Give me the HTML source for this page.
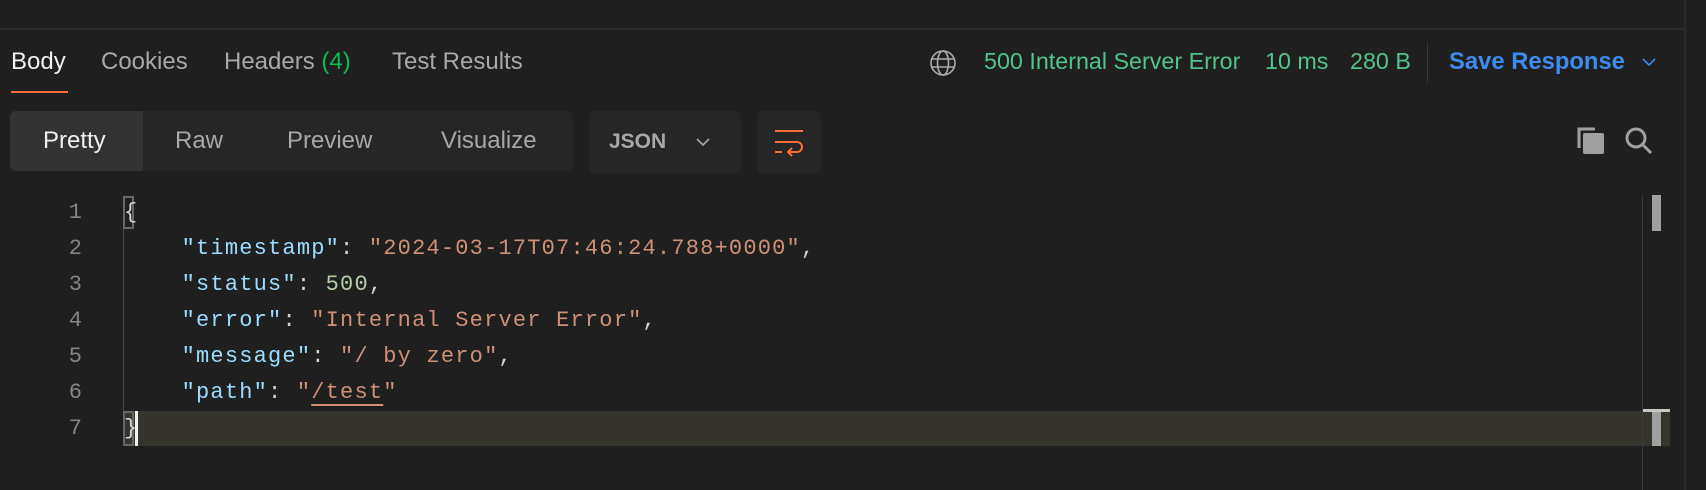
<!DOCTYPE html>
<html><head><meta charset="utf-8"><style>
body{margin:0;width:1706px;height:490px;background:#1f1f1f;overflow:hidden;position:relative;font-family:"Liberation Sans",sans-serif}
.a{position:absolute}
.t{font-size:24px;color:#a8a8a8;top:48px;white-space:nowrap}
.code{font-family:"Liberation Mono",monospace;font-size:22px;letter-spacing:1.2px;white-space:pre;line-height:36px}
.k{color:#9cdcfe}.s{color:#ce9178}.n{color:#b5cea8}.p{color:#d4d4d4}
.ln{font-family:"Liberation Mono",monospace;font-size:22px;color:#858585;width:82px;text-align:right;left:0;line-height:36px}
</style></head><body>
<div class="a" style="left:0;top:28px;width:1685px;height:2px;background:#2b2b2b"></div>
<div class="a" style="left:1684px;top:0;width:2px;height:490px;background:#2a2a2a"></div>
<div class="a t" style="left:11px;color:#f0f0f0">Body</div>
<div class="a t" style="left:101px">Cookies</div>
<div class="a t" style="left:224px">Headers <span style="color:#0cbb52">(4)</span></div>
<div class="a t" style="left:392px">Test Results</div>
<div class="a" style="left:11px;top:91px;width:57px;height:2px;background:#ff6c37"></div>
<svg class="a" style="left:929px;top:49px" width="28" height="28" viewBox="0 0 28 28" fill="none" stroke="#aaa" stroke-width="1.6"><circle cx="14" cy="14" r="12"/><ellipse cx="14" cy="14" rx="5.5" ry="12"/><path d="M3 10h22M3 18h22"/></svg>
<div class="a t" style="left:984px;color:#4fc58b;font-size:23.3px">500 Internal Server Error</div>
<div class="a t" style="left:1265px;color:#4fc58b;font-size:23.3px">10 ms</div>
<div class="a t" style="left:1350px;color:#4fc58b;font-size:23.3px">280 B</div>
<div class="a" style="left:1427px;top:43px;width:1px;height:40px;background:#3a3a3a"></div>
<div class="a t" style="left:1449px;color:#3e8bf0;font-weight:bold;font-size:23.8px">Save Response</div>
<svg class="a" style="left:1641px;top:56px" width="16" height="12" viewBox="0 0 16 12" fill="none" stroke="#3e8bf0" stroke-width="1.6"><path d="M2 3l6 6 6-6"/></svg>
<div class="a" style="left:10px;top:111px;width:563px;height:60px;background:#262626;border-radius:6px"></div>
<div class="a" style="left:10px;top:111px;width:133px;height:60px;background:#333;border-radius:6px 0 0 6px"></div>
<div class="a t" style="left:43px;top:127px;color:#f0f0f0">Pretty</div>
<div class="a t" style="left:175px;top:127px">Raw</div>
<div class="a t" style="left:287px;top:127px">Preview</div>
<div class="a t" style="left:441px;top:127px">Visualize</div>
<div class="a" style="left:589px;top:111px;width:152px;height:63px;background:#262626;border-radius:6px"></div>
<div class="a t" style="left:609px;top:130px;font-weight:bold;color:#a8a8a8;font-size:21px">JSON</div>
<svg class="a" style="left:695px;top:136px" width="16" height="12" viewBox="0 0 16 12" fill="none" stroke="#a8a8a8" stroke-width="1.6"><path d="M2 3l6 6 6-6"/></svg>
<div class="a" style="left:757px;top:111px;width:64px;height:63px;background:#262626;border-radius:6px"></div>
<svg class="a" style="left:773px;top:128px" width="32" height="30" viewBox="0 0 32 30" fill="none" stroke="#ff6c37" stroke-width="2"><path d="M2 3h28M2 14h22a5 5 0 0 1 0 10h-8M19 20l-4 4 4 4M2 24h7"/></svg>
<svg class="a" style="left:1576px;top:126px" width="30" height="30" viewBox="0 0 30 30"><path d="M3 22V3h16" fill="none" stroke="#a0a0a0" stroke-width="3"/><rect x="7" y="7" width="21" height="21" rx="2" fill="#a0a0a0"/></svg>
<svg class="a" style="left:1624px;top:126px" width="30" height="30" viewBox="0 0 30 30" fill="none" stroke="#a0a0a0" stroke-width="3"><circle cx="12" cy="12" r="9"/><path d="M19 19l8 8"/></svg>
<div class="a" style="left:123px;top:411px;width:1547px;height:35px;background:#35352d"></div>
<div class="a" style="left:123px;top:196px;width:1px;height:250px;background:#4a4a4a"></div>
<div class="a" style="left:1642px;top:195px;width:1px;height:295px;background:#3a3a3a"></div>
<div class="a" style="left:1652px;top:195px;width:9px;height:36px;background:#a0a0a0"></div>
<div class="a" style="left:1652px;top:411px;width:9px;height:35px;background:#a0a0a0"></div>
<div class="a" style="left:1643px;top:409px;width:27px;height:3px;background:#c8c8c0"></div>
<div class="a" style="left:123px;top:196px;width:11px;height:33px;border:2px solid #666;box-sizing:border-box"></div>
<div class="a" style="left:123px;top:411px;width:11px;height:35px;border:2px solid #666;box-sizing:border-box"></div>
<div class="a" style="left:135px;top:411px;width:3px;height:35px;background:#f0f0f0"></div>
<div class="a ln" style="top:195px">1<br>2<br>3<br>4<br>5<br>6<br>7</div>
<div class="a code" style="left:124px;top:195px"><span class="p">{</span>
<span class="p">    </span><span class="k">"timestamp"</span><span class="p">: </span><span class="s">"2024-03-17T07:46:24.788+0000"</span><span class="p">,</span>
<span class="p">    </span><span class="k">"status"</span><span class="p">: </span><span class="n">500</span><span class="p">,</span>
<span class="p">    </span><span class="k">"error"</span><span class="p">: </span><span class="s">"Internal Server Error"</span><span class="p">,</span>
<span class="p">    </span><span class="k">"message"</span><span class="p">: </span><span class="s">"/ by zero"</span><span class="p">,</span>
<span class="p">    </span><span class="k">"path"</span><span class="p">: </span><span class="s">"<span style="text-decoration:underline;text-underline-offset:6px">/test</span>"</span>
<span class="p">}</span></div>
</body></html>
